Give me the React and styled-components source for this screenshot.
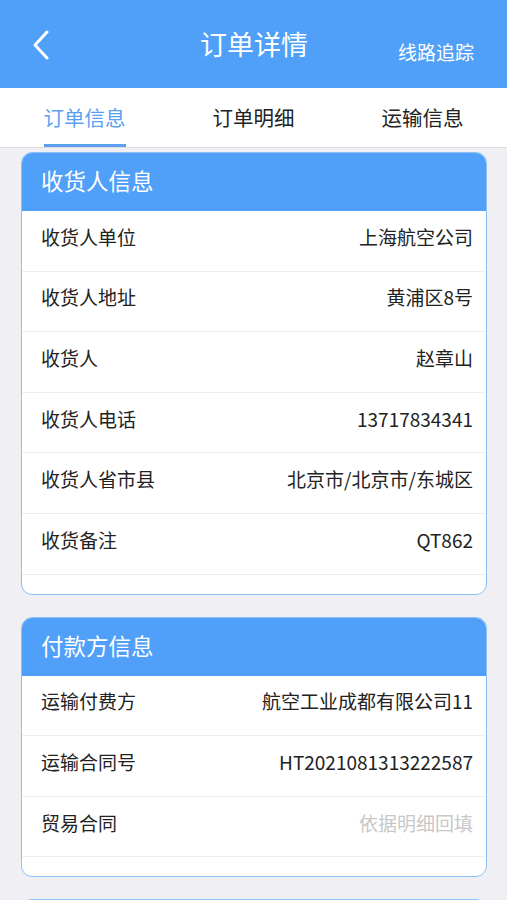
import styled, { createGlobalStyle } from "styled-components";

const GlobalStyle = createGlobalStyle`
  html, body {
    margin: 0;
    padding: 0;
    background: #efeff4;
    font-family: "Noto Sans CJK SC", "Noto Sans", sans-serif;
  }
`;

const receiver = [
  { label: "收货人单位", value: "上海航空公司" },
  { label: "收货人地址", value: "黄浦区8号" },
  { label: "收货人", value: "赵章山" },
  { label: "收货人电话", value: "13717834341" },
  { label: "收货人省市县", value: "北京市/北京市/东城区" },
  { label: "收货备注", value: "QT862" },
];

const payer = [
  { label: "运输付费方", value: "航空工业成都有限公司11" },
  { label: "运输合同号", value: "HT2021081313222587" },
  { label: "贸易合同", value: "依据明细回填", placeholder: true },
];

const App = () => {
  return (
    <Page>
      <GlobalStyle />
      <NavBar>
        <BackButton>
          <svg width="18" height="30" viewBox="0 0 18 30">
            <path
              d="M15 2 L3 15 L15 28"
              fill="none"
              stroke="#fff"
              strokeWidth="3"
              strokeLinecap="round"
              strokeLinejoin="round"
            />
          </svg>
        </BackButton>
        <Title>订单详情</Title>
        <NavAction>线路追踪</NavAction>
      </NavBar>
      <Tabs>
        <Tab active>订单信息</Tab>
        <Tab>订单明细</Tab>
        <Tab>运输信息</Tab>
      </Tabs>
      <Content>
        <Card>
          <CardHeader>收货人信息</CardHeader>
          {receiver.map((r) => (
            <Row key={r.label}>
              <Label>{r.label}</Label>
              <Value>{r.value}</Value>
            </Row>
          ))}
          <CardFoot />
        </Card>
        <Card>
          <CardHeader>付款方信息</CardHeader>
          {payer.map((r) => (
            <Row key={r.label}>
              <Label>{r.label}</Label>
              <Value placeholder={r.placeholder ? 1 : 0}>{r.value}</Value>
            </Row>
          ))}
          <CardFoot />
        </Card>
        <Card>
          <CardHeader />
        </Card>
      </Content>
    </Page>
  );
};
export default App;

const Page = styled.div`
  width: 507px;
  height: 900px;
  overflow: hidden;
  background: #efeff4;
`;

const NavBar = styled.div`
  height: 88px;
  background: #509ff8;
  display: flex;
  align-items: center;
  padding: 0 33px 0 32px;
  box-sizing: border-box;
  color: #fff;
`;

const BackButton = styled.div`
  width: 60px;
  display: flex;
  align-items: center;
  margin-top: 1px;
`;

const Title = styled.div`
  flex: 1;
  text-align: center;
  font-size: 27px;
  margin-top: -2px;
  padding-left: 18px;
`;

const NavAction = styled.div`
  font-size: 19px;
  margin-top: 14px;
`;

const Tabs = styled.div`
  height: 59px;
  background: #fff;
  display: grid;
  grid-template-columns: repeat(3, 1fr);
  border-bottom: 1px solid #dcdcdc;
`;

const Tab = styled.div`
  justify-self: center;
  font-size: 20.5px;
  color: ${(p) => (p.active ? "#5a9ff0" : "#222")};
  display: flex;
  align-items: center;
  padding-top: 1px;
  box-sizing: border-box;
  border-bottom: 3px solid ${(p) => (p.active ? "#5a9ff0" : "transparent")};
  height: 59px;
`;

const Content = styled.div`
  padding: 4px 20px 0 21px;
  display: flex;
  flex-direction: column;
  gap: 22px;
`;

const Card = styled.div`
  background: #fff;
  border: 1.5px solid #8dc1f3;
  border-radius: 11px;
  overflow: hidden;
`;

const CardHeader = styled.div`
  background: #509ff8;
  color: #fff;
  height: 58px;
  font-size: 22.5px;
  display: flex;
  align-items: center;
  padding: 0 19px 4px;
  box-sizing: border-box;
`;

const Row = styled.div`
  height: 60.6px;
  display: flex;
  justify-content: space-between;
  align-items: center;
  padding: 0 13px 9px 19px;
  box-sizing: border-box;
  border-bottom: 1px solid #eeeeee;
  font-size: 19px;
`;

const Label = styled.div`
  color: #222;
`;

const Value = styled.div`
  color: ${(p) => (p.placeholder ? "#c8c8c8" : "#222")};
`;

const CardFoot = styled.div`
  height: 19px;
`;
